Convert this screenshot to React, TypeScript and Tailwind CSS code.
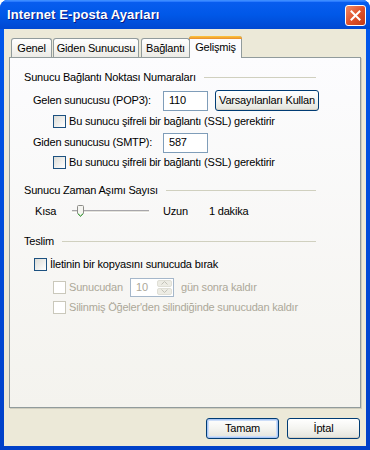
import React from "react";

const font = { fontFamily: '"Liberation Sans", Arial, sans-serif' };

function Checkbox({ disabled = false }: { disabled?: boolean }) {
  return (
    <div
      className={
        disabled
          ? "w-[13px] h-[13px] shrink-0 border border-[#CAC8BB] bg-[#FFFFFF]"
          : "w-[13px] h-[13px] shrink-0 border border-[#1C5180] bg-gradient-to-br from-[#DCDCD7] to-[#FFFFFF]"
      }
    />
  );
}

function SectionHeader({ text }: { text: string }) {
  return (
    <div className="flex items-center h-[14px] pl-[14px] pr-[44px]">
      <span className="whitespace-nowrap">{text}</span>
      <div className="flex-1 h-px bg-[#D0D0BF] ml-[8px]" />
    </div>
  );
}

function CheckRow({
  text,
  pl,
  disabled = false,
  className = "",
}: {
  text: string;
  pl: string;
  disabled?: boolean;
  className?: string;
}) {
  return (
    <div className={`flex items-center h-[14px] ${pl} ${className}`}>
      <Checkbox disabled={disabled} />
      <span className={`ml-[3px] whitespace-nowrap ${disabled ? "text-[#ACA899]" : ""}`}>{text}</span>
    </div>
  );
}

function XPButton({ label, def = false, w }: { label: string; def?: boolean; w: string }) {
  return (
    <div
      className={`${w} h-[21px] rounded-[3px] border border-[#003C74] bg-gradient-to-b from-[#FFFFFF] via-[#F4F4F0] to-[#E3E3DB] flex items-center justify-center ${
        def ? "shadow-[inset_0_0_0_1px_#A8C6F5,inset_0_0_0_2px_#CCDDF8]" : "shadow-[inset_0_-1px_0_#D6D0C5]"
      }`}
    >
      <span className="whitespace-nowrap">{label}</span>
    </div>
  );
}

function Tab({ label, w, className = "" }: { label: string; w: string; className?: string }) {
  return (
    <div
      className={`${w} h-[19px] rounded-t-[3px] border border-b-0 border-[#919B9C] bg-gradient-to-b from-[#FFFFFF] to-[#ECEBE6] flex items-center justify-center ${className}`}
    >
      <span className="whitespace-nowrap">{label}</span>
    </div>
  );
}

export default function App() {
  return (
    <div className="w-[370px] h-[450px] bg-white text-[11px] tracking-[-0.2px] text-black leading-none" style={font}>
      <div className="w-full h-full flex flex-col rounded-t-[8px] bg-gradient-to-b from-[#0058EE] to-[#0040C8] overflow-hidden">
        {/* Title bar */}
        <div className="h-[29px] shrink-0 flex items-center pl-[7px] pr-[4px] bg-gradient-to-b from-[#0A5EF0] via-[#0058E8] to-[#0048D2] shadow-[inset_0_1px_0_#3C8CFF,inset_0_2px_0_#2A7BFF]">
          <span className="flex-1 text-white font-bold text-[13px] tracking-[0.1px] [text-shadow:1px_1px_0_#0A1883] whitespace-nowrap">
            Internet E-posta Ayarları
          </span>
          <div className="w-[21px] h-[21px] mt-[1px] rounded-[3px] border border-white bg-gradient-to-br from-[#F08A66] via-[#E0522B] to-[#C23A14] flex items-center justify-center">
            <svg width="11" height="11" viewBox="0 0 11 11">
              <path d="M1.5 1.5 L9.5 9.5 M9.5 1.5 L1.5 9.5" stroke="white" strokeWidth="2" strokeLinecap="square" />
            </svg>
          </div>
        </div>

        {/* Client */}
        <div className="flex-1 mx-[4px] mb-[4px] bg-[#ECE9D8] flex flex-col">
          {/* Tabs */}
          <div className="h-[21px] mt-[7px] flex items-end pl-[7px]">
            <Tab label="Genel" w="w-[41px]" />
            <Tab label="Giden Sunucusu" w="w-[86px]" className="ml-[1px]" />
            <Tab label="Bağlantı" w="w-[49px]" className="ml-[2px]" />
            <div className="relative z-10 -ml-px w-[53px] h-[22px] -mb-px rounded-t-[3px] border border-b-0 border-[#919B9C] bg-[#FCFCFE] flex flex-col">
              <div className="h-[3px] -mx-px -mt-px rounded-t-[3px] bg-gradient-to-b from-[#FFC83C] to-[#E68B2C]" />
              <div className="flex-1 flex items-start justify-center pt-[3px]">
                <span className="whitespace-nowrap">Gelişmiş</span>
              </div>
            </div>
          </div>

          {/* Panel */}
          <div className="ml-[5px] w-[352px] h-[351px] border border-[#919B9C] bg-gradient-to-b from-[#FCFCFE] to-[#F4F3EE] shadow-[1px_1px_0_#D0CEBF] flex flex-col">
            <div className="mt-[12px]">
              <SectionHeader text="Sunucu Bağlantı Noktası Numaraları" />
            </div>

            <div className="mt-[6px] h-[21px] flex items-center pl-[23px]">
              <span className="w-[130px] whitespace-nowrap">Gelen sunucusu (POP3):</span>
              <div className="w-[45px] h-[20px] border border-[#7F9DB9] bg-white flex items-center pl-[5px]">110</div>
              <div className="ml-[7px]">
                <XPButton label="Varsayılanları Kullan" w="w-[104px]" />
              </div>
            </div>

            <CheckRow text="Bu sunucu şifreli bir bağlantı (SSL) gerektirir" pl="pl-[43px]" className="mt-[3px]" />

            <div className="mt-[4px] h-[21px] flex items-center pl-[23px]">
              <span className="w-[130px] whitespace-nowrap">Giden sunucusu (SMTP):</span>
              <div className="w-[45px] h-[20px] border border-[#7F9DB9] bg-white flex items-center pl-[5px]">587</div>
            </div>

            <CheckRow text="Bu sunucu şifreli bir bağlantı (SSL) gerektirir" pl="pl-[43px]" className="mt-[2px]" />

            <div className="mt-[14px]">
              <SectionHeader text="Sunucu Zaman Aşımı Sayısı" />
            </div>

            <div className="mt-[5px] h-[18px] flex items-center pl-[25px]">
              <span className="w-[37px]">Kısa</span>
              <div className="relative w-[77px] h-[18px] flex items-center">
                <div className="w-full h-[3px] border-t border-[#A7A6AA] border-b border-b-white bg-[#E4E3DC]" />
                <svg className="absolute left-[5px] top-[3px]" width="7" height="12" viewBox="0 0 7 12">
                  <path d="M0.5 1.5 Q0.5 0.5 1.5 0.5 H5.5 Q6.5 0.5 6.5 1.5 V8.5 L3.5 11.5 L0.5 8.5 Z" fill="#F5F5F1" stroke="#8C8C88" />
                  <path d="M1 8.7 L3.5 11 L6 8.7" fill="none" stroke="#2BA62B" />
                </svg>
              </div>
              <span className="ml-[14px] w-[46px]">Uzun</span>
              <span className="whitespace-nowrap">1 dakika</span>
            </div>

            <div className="mt-[14px]">
              <SectionHeader text="Teslim" />
            </div>

            <CheckRow text="İletinin bir kopyasını sunucuda bırak" pl="pl-[24px]" className="mt-[9px]" />

            <div className="mt-[6px] h-[20px] flex items-center pl-[43px]">
              <Checkbox disabled />
              <span className="ml-[3px] w-[61px] text-[#ACA899] whitespace-nowrap">Sunucudan</span>
              <div className="w-[44px] h-[19px] border border-[#A5B7CA] bg-white flex items-center">
                <span className="flex-1 pl-[5px] text-[#ACA899]">10</span>
                <div className="w-[15px] h-[15px] mr-px flex flex-col gap-px">
                  <div className="flex-1 rounded-[2px] bg-[#EDECE4] border border-[#E0DFD6] flex items-center justify-center">
                    <svg width="7" height="4" viewBox="0 0 7 4"><path d="M0.5 3.5 L3.5 0.5 L6.5 3.5" fill="none" stroke="#C3C2B8" /></svg>
                  </div>
                  <div className="flex-1 rounded-[2px] bg-[#EDECE4] border border-[#E0DFD6] flex items-center justify-center">
                    <svg width="7" height="4" viewBox="0 0 7 4"><path d="M0.5 0.5 L3.5 3.5 L6.5 0.5" fill="none" stroke="#C3C2B8" /></svg>
                  </div>
                </div>
              </div>
              <span className="ml-[7px] text-[#ACA899] whitespace-nowrap">gün sonra kaldır</span>
            </div>

            <CheckRow
              text="Silinmiş Öğeler'den silindiğinde sunucudan kaldır"
              pl="pl-[43px]"
              disabled
              className="mt-[3px]"
            />
          </div>

          {/* Buttons */}
          <div className="mt-[10px] flex justify-end pr-[6px] gap-[8px]">
            <XPButton label="Tamam" def w="w-[73px]" />
            <XPButton label="İptal" w="w-[73px]" />
          </div>
        </div>
      </div>
    </div>
  );
}
